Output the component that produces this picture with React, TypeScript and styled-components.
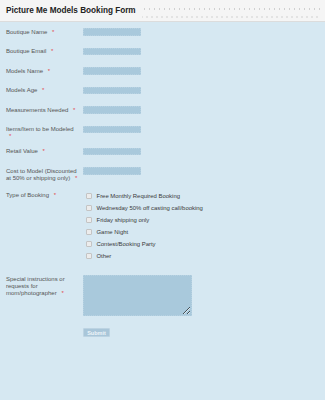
import React from "react";
import styled, { createGlobalStyle } from "styled-components";

const Global = createGlobalStyle`
  html, body { margin: 0; padding: 0; }
  body {
    background: #d6e8f2;
    font-family: "Liberation Sans", Arial, sans-serif;
    width: 325px;
    min-height: 400px;
  }
`;

const Header = styled.header`
  display: flex;
  align-items: stretch;
  height: 21px;
  background: #f5f5f5;
  border-bottom: 1px solid #dcdcdc;
  padding-left: 6px;
`;

const Title = styled.h1`
  margin: 0;
  align-self: center;
  font-size: 8.2px;
  font-weight: bold;
  color: #222;
  white-space: nowrap;
`;

const Dots = styled.div`
  flex: 1;
  margin: 5px 4px 0 6px;
  background-image: radial-gradient(circle at 2.5px 4px, #d0d0d0 0.6px, transparent 0.9px),
    radial-gradient(circle at 2.5px 4px, #d0d0d0 0.6px, transparent 0.9px);
  background-size: 5px 16px, 5px 16px;
  background-position: 0 0, 2.5px 8px;
`;

const Form = styled.form`
  padding: 6px 0 0 6px;
  font-size: 5.9px;
`;

const Row = styled.div`
  display: grid;
  grid-template-columns: 77px 1fr;
  align-items: start;
  min-height: 11px;
  margin-bottom: 8.5px;
`;

const Label = styled.label<{ $pt?: number }>`
  display: block;
  width: 73px;
  font-size: 6px;
  line-height: 6.7px;
  color: #555;
  padding-top: ${(p) => p.$pt ?? 0.5}px;
`;

const Req = styled.span`
  color: #e2474b;
  margin-left: 3px;
`;

const TextInput = styled.input`
  box-sizing: border-box;
  width: 58px;
  height: 7.5px;
  margin: 0;
  padding: 0;
  border: 1px dotted #b8d2e2;
  background: #a9c9dc;
  outline: none;
`;

const Options = styled.div`
  display: flex;
  flex-direction: column;
  padding: 0 0 4px 3px;
`;

const Option = styled.label`
  display: flex;
  align-items: center;
  gap: 4.5px;
  height: 12.1px;
  font-size: 5.95px;
  color: #3a3a3a;
`;

const Check = styled.input`
  appearance: none;
  -webkit-appearance: none;
  box-sizing: border-box;
  width: 6px;
  height: 6px;
  margin: 0;
  background: #ececec;
  border: 1px solid #c4c4c4;
  border-radius: 1px;
`;

const Area = styled.textarea`
  box-sizing: border-box;
  display: block;
  width: 109px;
  height: 41px;
  margin: 0;
  padding: 0;
  border: 1px dotted #b8d2e2;
  background: #a9c9dc;
  resize: both;
  outline: none;
`;

const SubmitRow = styled.div`
  display: flex;
  padding: 4px 0 0 77px;
`;

const Submit = styled.button`
  box-sizing: border-box;
  width: 27px;
  height: 8.5px;
  padding: 0;
  border: 1px solid #bcd3e2;
  border-radius: 1px;
  background: #a9c6d9;
  color: #eef5fa;
  font-family: "Liberation Sans", Arial, sans-serif;
  font-size: 5.5px;
  font-weight: bold;
  line-height: 6px;
`;

const fields: string[] = [
  "Boutique Name",
  "Boutique Email",
  "Models Name",
  "Models Age",
  "Measurements Needed",
  "Items/Item to be Modeled",
  "Retail Value",
  "Cost to Model (Discounted at 50% or shipping only)",
];

const options = [
  "Free Monthly Required Booking",
  "Wednesday 50% off casting call/booking",
  "Friday shipping only",
  "Game Night",
  "Contest/Booking Party",
  "Other",
];

export default function App() {
  return (
    <>
      <Global />
      <Header>
        <Title>Picture Me Models Booking Form</Title>
        <Dots />
      </Header>
      <Form onSubmit={(e) => e.preventDefault()}>
        {fields.map((f) => (
          <Row key={f}>
            <Label>
              {f} <Req>*</Req>
            </Label>
            <TextInput type="text" />
          </Row>
        ))}
        <Row>
          <Label $pt={2}>
            Type of Booking <Req>*</Req>
          </Label>
          <Options>
            {options.map((o) => (
              <Option key={o}>
                <Check type="checkbox" />
                {o}
              </Option>
            ))}
          </Options>
        </Row>
        <Row>
          <Label $pt={1.5}>
            Special instructions or requests for mom/photographer <Req>*</Req>
          </Label>
          <Area />
        </Row>
        <SubmitRow>
          <Submit type="submit">Submit</Submit>
        </SubmitRow>
      </Form>
    </>
  );
}
